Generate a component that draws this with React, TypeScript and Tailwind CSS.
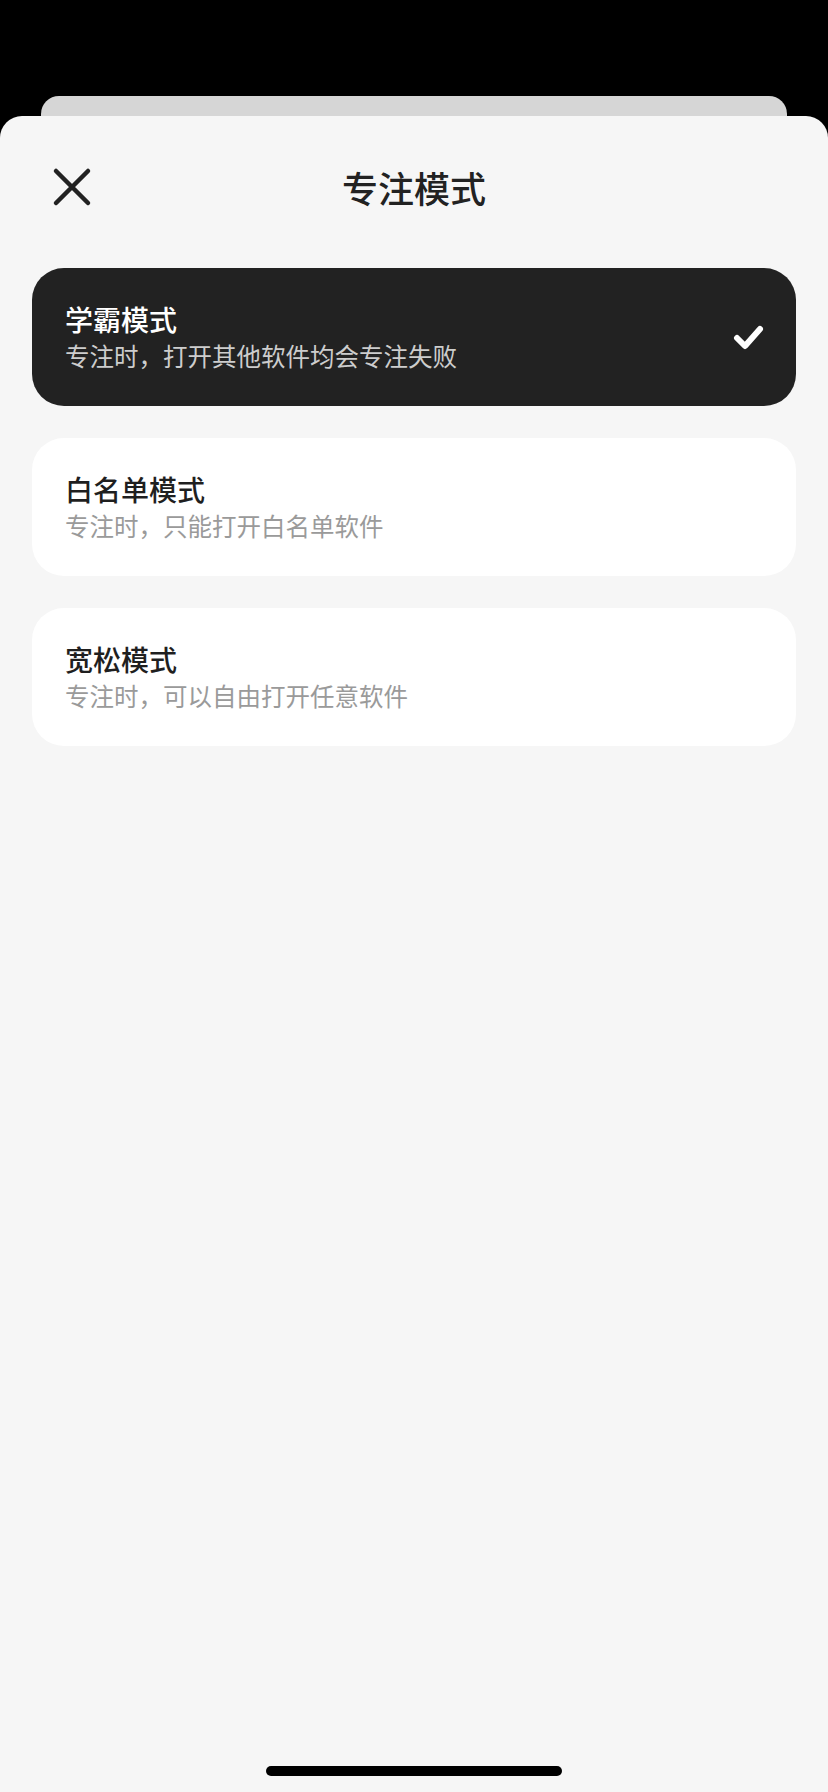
import { ReactNode } from "react";

type Mode = {
  title: string;
  desc: string;
  active?: boolean;
};

const modes: Mode[] = [
  { title: "学霸模式", desc: "专注时，打开其他软件均会专注失败", active: true },
  { title: "白名单模式", desc: "专注时，只能打开白名单软件" },
  { title: "宽松模式", desc: "专注时，可以自由打开任意软件" },
];

function CloseIcon() {
  return (
    <svg width="40" height="40" viewBox="0 0 40 40" fill="none">
      <path
        d="M4 4 L36 36 M36 4 L4 36"
        stroke="#222222"
        strokeWidth="4.5"
        strokeLinecap="round"
      />
    </svg>
  );
}

function CheckIcon() {
  return (
    <svg width="34" height="30" viewBox="0 0 34 30" fill="none">
      <path
        d="M5 17 L13 25 L28 8"
        stroke="#ffffff"
        strokeWidth="6"
        strokeLinecap="round"
        strokeLinejoin="round"
      />
    </svg>
  );
}

function ModeCard({ mode }: { mode: Mode }): ReactNode {
  return (
    <div
      className={
        mode.active
          ? "flex h-[138px] items-center justify-between rounded-[32px] bg-[#222222] pb-[2px] pl-[33px] pr-[30px]"
          : "flex h-[138px] items-center justify-between rounded-[32px] bg-white pb-[2px] pl-[33px] pr-[30px]"
      }
    >
      <div className="flex flex-col">
        <p
          className={
            mode.active
              ? "text-[28px] font-medium leading-[36px] text-white"
              : "text-[28px] font-medium leading-[36px] text-[#1f1f1f]"
          }
        >
          {mode.title}
        </p>
        <p
          className={
            mode.active
              ? "mt-[3px] text-[24.5px] leading-[32px] text-[#cdcdcd]"
              : "mt-[3px] text-[24.5px] leading-[32px] text-[#9a9a9a]"
          }
        >
          {mode.desc}
        </p>
      </div>
      {mode.active && <CheckIcon />}
    </div>
  );
}

export default function App() {
  return (
    <div
      className="flex h-[1792px] w-full flex-col overflow-hidden bg-black"
      style={{ fontFamily: '"Noto Sans CJK SC", "Noto Sans", sans-serif' }}
    >
      <div className="mx-[41px] mt-[96px] h-[20px] shrink-0 rounded-t-[18px] bg-[#d6d6d6]" />
      <div className="flex flex-1 flex-col rounded-t-[22px] bg-[#f6f6f6]">
        <div className="mt-[51px] grid h-[40px] grid-cols-[1fr_auto_1fr] items-center px-[52px]">
          <div className="flex items-center">
            <CloseIcon />
          </div>
          <h1 className="text-[36px] font-medium leading-[40px] text-[#222222]">
            专注模式
          </h1>
          <div />
        </div>

        <div className="mt-[61px] flex flex-col gap-[32px] px-[32px]">
          {modes.map((m) => (
            <ModeCard key={m.title} mode={m} />
          ))}
        </div>

        <div className="mt-auto mb-[16px] flex justify-center">
          <div className="h-[10px] w-[296px] rounded-full bg-black" />
        </div>
      </div>
    </div>
  );
}
